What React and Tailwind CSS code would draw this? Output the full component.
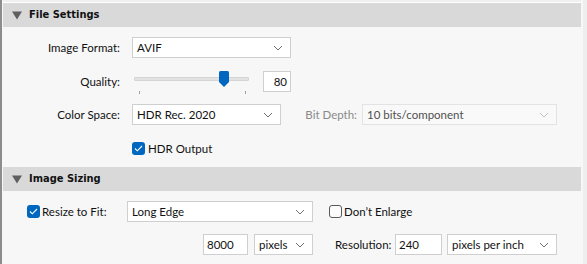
import React from "react";

const Chevron = ({ color = "#707070" }) => (
  <svg width="10" height="6" viewBox="0 0 10 6" className="shrink-0">
    <path d="M1 1l4 4 4-4" stroke={color} fill="none" strokeWidth="1" />
  </svg>
);

const Triangle = () => (
  <svg width="10" height="9" viewBox="0 0 10 9" className="shrink-0">
    <path d="M0 0.5h10L5 8.5z" fill="#5f5f5f" />
  </svg>
);

const Check = () => (
  <div className="w-[13px] h-[13px] rounded-[3px] bg-[#0067c0] flex items-center justify-center shrink-0">
    <svg width="9" height="7" viewBox="0 0 9 7">
      <path d="M1 3.5l2.3 2.3L8 1" stroke="#fff" fill="none" strokeWidth="1.1" />
    </svg>
  </div>
);

const Select = ({ w, text, disabled }) => (
  <div
    className={
      "h-[21px] flex items-center justify-between pl-[4px] pr-[7px] border shrink-0 whitespace-nowrap " +
      (disabled
        ? "border-[#e3e3e3] bg-[#f9f9f9] text-[#505050]"
        : "border-[#cfcfcf] bg-white text-[#111]")
    }
    style={{ width: w }}
  >
    <span>{text}</span>
    <Chevron color={disabled ? "#c0c0c0" : "#707070"} />
  </div>
);

const Header = ({ title }) => (
  <div className="h-[24px] mr-[2px] bg-[#d9d9d9] flex items-center pl-[9px] gap-[7px]">
    <Triangle />
    <span className="font-['DejaVu_Sans_Condensed',sans-serif] font-bold text-[11px] text-[#111]">
      {title}
    </span>
  </div>
);

export default function App() {
  return (
    <div className="w-[587px] h-[264px] flex bg-[#f7f7f7] overflow-hidden font-['Lato',sans-serif] text-[11.5px] text-[#111] whitespace-nowrap">
      <div className="w-[2px] bg-[#8c8c8c] shrink-0" />
      <div className="flex-1 flex flex-col pl-px">
        <div className="h-[3px] bg-[#f0f0f0] border-b border-white mr-[2px]" />
        <Header title="File Settings" />
        {/* Image Format */}
        <div className="flex items-center mt-[10px] h-[21px]">
          <div className="w-[117px] text-right">Image Format:</div>
          <div className="ml-[12px]">
            <Select w={159} text="AVIF" />
          </div>
        </div>
        {/* Quality */}
        <div className="flex items-center mt-[13px] h-[21px]">
          <div className="w-[117px] text-right">Quality:</div>
          <div className="ml-[12px] w-[121px] h-[21px] relative">
            <div className="absolute left-[2px] top-[6px] w-[115px] h-[4px] bg-[#e2e2e2] border border-[#d4d4d4] rounded-[1px]" />
            <div className="absolute left-[7px] top-[20px] w-px h-[3px] bg-[#a0a0a0]" />
            <div className="absolute left-[113px] top-[20px] w-px h-[3px] bg-[#a0a0a0]" />
            <svg className="absolute left-[87px] top-0" width="10" height="16" viewBox="0 0 10 16">
              <path d="M0 1.5Q0 0 1.5 0H8.5Q10 0 10 1.5V11L5 16L0 11Z" fill="#0067c0" />
            </svg>
          </div>
          <div className="ml-[10px] w-[28px] h-[21px] bg-white border border-[#cfcfcf] flex items-center justify-end pr-[3px]">
            80
          </div>
        </div>
        {/* Color Space */}
        <div className="flex items-center mt-[12px] h-[21px]">
          <div className="w-[117px] text-right">Color Space:</div>
          <div className="ml-[12px]">
            <Select w={149} text="HDR Rec. 2020" />
          </div>
          <div className="w-[81px] text-right pr-[5px] text-[#8a8a8a]">Bit Depth:</div>
          <Select w={195} text="10 bits/component" disabled />
        </div>
        {/* HDR Output */}
        <div className="flex items-center mt-[17px] h-[13px] pl-[129px] gap-[3px]">
          <Check />
          <span>HDR Output</span>
        </div>
        <div className="mt-[12px]">
          <Header title="Image Sizing" />
        </div>
        {/* Resize to fit */}
        <div className="flex items-center mt-[10px] h-[21px] pl-[24px]">
          <div className="w-[100px] flex items-center gap-[2px]">
            <Check />
            <span>Resize to Fit:</span>
          </div>
          <Select w={186} text="Long Edge" />
          <div className="ml-[16px] flex items-center gap-[2px]">
            <div className="w-[13px] h-[13px] rounded-[3px] border border-[#5a5a5a] bg-[#fbfbfb]" />
            <span>Don’t Enlarge</span>
          </div>
        </div>
        {/* Size row */}
        <div className="flex items-center mt-[12px] h-[21px] pl-[200px]">
          <div className="w-[45px] h-[21px] bg-white border border-[#cfcfcf] flex items-center pl-[3px]">
            8000
          </div>
          <div className="ml-[6px]">
            <Select w={59} text="pixels" />
          </div>
          <div className="ml-[22px] w-[60px]">Resolution:</div>
          <div className="w-[47px] h-[21px] bg-white border border-[#cfcfcf] flex items-center pl-[3px]">
            240
          </div>
          <div className="ml-[5px]">
            <Select w={110} text="pixels per inch" />
          </div>
        </div>
      </div>
      <div className="w-[4px] bg-[#eeeeee] shrink-0" />
    </div>
  );
}
